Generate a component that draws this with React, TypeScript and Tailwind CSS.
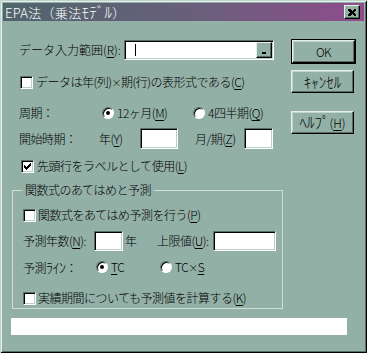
import React from "react";

// 3D edge colours for this colour scheme
// face #93b0a7, shadow #5a6e67, light #d2e2dc

const U = ({ children }: { children: React.ReactNode }) => (
  <span className="underline underline-offset-[2px] decoration-1">{children}</span>
);

const CheckBox = ({ checked }: { checked?: boolean }) => (
  <span className="flex h-[13px] w-[13px] shrink-0 items-center justify-center border border-t-[#5a6e67] border-l-[#5a6e67] border-r-white border-b-white bg-white shadow-[inset_1px_1px_0_#000,inset_-1px_-1px_0_#bcd0c9]">
    {checked && (
      <svg width="7" height="7" viewBox="0 0 7 7" shapeRendering="crispEdges">
        <path d="M6 0h1v3h-1v1h-1v1h-1v1h-1v1h-1v-1h-1v-1h-1v-3h1v1h1v1h1v-1h1v-1h1z" fill="#000" />
      </svg>
    )}
  </span>
);

const Radio = ({ on }: { on?: boolean }) => (
  <span className="flex h-[12px] w-[12px] shrink-0 items-center justify-center rounded-full border border-t-[#5a6e67] border-l-[#5a6e67] border-r-white border-b-white bg-white shadow-[inset_1px_1px_0_#000]">
    {on && <span className="h-[4px] w-[4px] rounded-full bg-black" />}
  </span>
);

const Field = ({ className, children }: { className: string; children?: React.ReactNode }) => (
  <div
    className={
      "flex shrink-0 border border-t-[#5a6e67] border-l-[#5a6e67] border-r-white border-b-white bg-white shadow-[inset_1px_1px_0_#000,inset_-1px_-1px_0_#bcd0c9] " +
      className
    }
  >
    {children}
  </div>
);

const Btn = ({ children, className = "" }: { children: React.ReactNode; className?: string }) => (
  <div
    className={
      "flex h-[23px] w-[63px] items-center justify-center border border-t-[#e4eeea] border-l-[#e4eeea] border-r-black border-b-black bg-[#93b0a7] shadow-[inset_-1px_-1px_0_#5a6e67,inset_1px_1px_0_#c0d4cd] " +
      className
    }
  >
    {children}
  </div>
);

export default function App() {
  return (
    <div className="h-[353px] w-[367px] overflow-hidden whitespace-nowrap bg-[#93b0a7] pt-[3px] font-['Noto_Sans_CJK_JP',sans-serif] text-[12px] font-[300] leading-[18px] tracking-[-0.5px] text-black shadow-[inset_1px_1px_0_#c0d4cd,inset_-1px_-1px_0_#000,inset_2px_2px_0_#e4eeea,inset_-2px_-2px_0_#5a6e67]">
      {/* title bar */}
      <div className="mx-[3px] flex h-[18px] items-center justify-between bg-[linear-gradient(to_right,#4f656c,#6a5f7c_55%,#8f4c8c)] pl-[2px] pr-[4px]">
        <span className="text-[13px] leading-[18px] tracking-[0.3px] text-white">
          EPA法（乗法<span className="text-[15px]">ﾓﾃﾞﾙ</span>）
        </span>
        <div className="flex h-[14px] w-[16px] items-center justify-center border border-t-[#e4eeea] border-l-[#e4eeea] border-r-black border-b-black bg-[#93b0a7] shadow-[inset_-1px_-1px_0_#5a6e67]">
          <svg width="8" height="7" viewBox="0 0 8 7" shapeRendering="crispEdges">
            <path d="M0 0h2l2 2 2-2h2v1l-2 2.5 2 2.5v1h-2l-2-2-2 2h-2v-1l2-2.5-2-2.5z" fill="#000" />
          </svg>
        </div>
      </div>

      <div className="flex">
        {/* left column */}
        <div className="ml-[12px] w-[271px]">
          <div className="mt-[19px] flex h-[20px] items-center pl-[7px]">
            <span className="w-[105px] tracking-normal">
              データ入力範囲(<U>R</U>):
            </span>
            <Field className="h-[20px] w-[150px] items-center justify-between">
              <span className="ml-[10px] h-[12px] w-[1px] bg-black" />
              <div className="mr-[1px] flex h-[16px] w-[16px] items-end justify-center border border-t-[#e4eeea] border-l-[#e4eeea] border-r-black border-b-black bg-[#93b0a7] pb-[3px] shadow-[inset_-1px_-1px_0_#5a6e67]">
                <span className="h-[2px] w-[4px] bg-black" />
              </div>
            </Field>
          </div>

          <div className="mt-[13px] flex h-[18px] items-center gap-[3px] pl-[8px]">
            <CheckBox />
            <span>
              データは年(列)<span className="text-[10px]">×</span>期(行)の表形式である(<U>C</U>)
            </span>
          </div>

          <div className="mt-[13px] flex h-[18px] items-center pl-[7px]">
            <span className="w-[83px]">周期：</span>
            <div className="flex w-[91px] items-center gap-[3px]">
              <Radio on />
              <span>
                12ヶ月(<U>M</U>)
              </span>
            </div>
            <div className="flex items-center gap-[3px]">
              <Radio />
              <span>
                4四半期(<U>Q</U>)
              </span>
            </div>
          </div>

          <div className="mt-[6px] flex h-[21px] items-center pl-[7px]">
            <span className="w-[80px]">開始時期：</span>
            <span className="w-[41px]">
              年(<U>Y</U>)
            </span>
            <Field className="h-[21px] w-[38px]" />
            <span className="ml-[17px] w-[49px]">
              月/期(<U>Z</U>)
            </span>
            <Field className="h-[21px] w-[29px]" />
          </div>

          <div className="mt-[8px] flex h-[18px] items-center gap-[3px] pl-[9px]">
            <CheckBox checked />
            <span>
              先頭行をラベルとして使用(<U>L</U>)
            </span>
          </div>

          <fieldset className="mt-[7px] border border-[#cddfd8] pb-[1px]">
            <legend className="ml-[9px] px-[3px] leading-[16px]">関数式のあてはめと予測</legend>

            <div className="mt-[8px] flex h-[18px] items-center gap-[2px] pl-[10px]">
              <CheckBox />
              <span>
                関数式をあてはめ予測を行う(<U>P</U>)
              </span>
            </div>

            <div className="mt-[7px] flex h-[20px] items-center pl-[10px]">
              <span className="w-[71px]">
                予測年数(<U>N</U>):
              </span>
              <Field className="h-[20px] w-[29px]" />
              <span className="ml-[2px] w-[32px]">年</span>
              <span className="w-[56px]">
                上限値(<U>U</U>):
              </span>
              <Field className="h-[20px] w-[63px]" />
            </div>

            <div className="mt-[7px] flex h-[18px] items-center pl-[10px]">
              <span className="w-[73px]">
                予測<span className="text-[14px]">ﾗｲﾝ</span>：
              </span>
              <div className="flex w-[64px] items-center gap-[3px]">
                <Radio on />
                <span>
                  <U>T</U>C
                </span>
              </div>
              <div className="flex items-center gap-[3px]">
                <Radio />
                <span>
                  TC<span className="text-[10px]">×</span>
                  <U>S</U>
                </span>
              </div>
            </div>

            <div className="mt-[13px] flex h-[18px] items-center gap-[2px] pl-[10px]">
              <CheckBox />
              <span>
                実績期間についても予測値を計算する(<U>K</U>)
              </span>
            </div>
          </fieldset>
        </div>

        {/* right column */}
        <div className="ml-[8px] flex flex-col pt-[18px]">
          <div className="border border-black">
            <Btn className="h-[22px] w-[61px]">OK</Btn>
          </div>
          <Btn className="mt-[6px]">
            <span className="text-[15px] tracking-normal">ｷｬﾝｾﾙ</span>
          </Btn>
          <Btn className="mt-[18px]">
            <span className="tracking-normal">
              <span className="text-[15px]">ﾍﾙﾌﾟ</span>(<U>H</U>)
            </span>
          </Btn>
        </div>
      </div>

      <div className="ml-[11px] mt-[9px] h-[17px] w-[336px] bg-white" />
    </div>
  );
}
